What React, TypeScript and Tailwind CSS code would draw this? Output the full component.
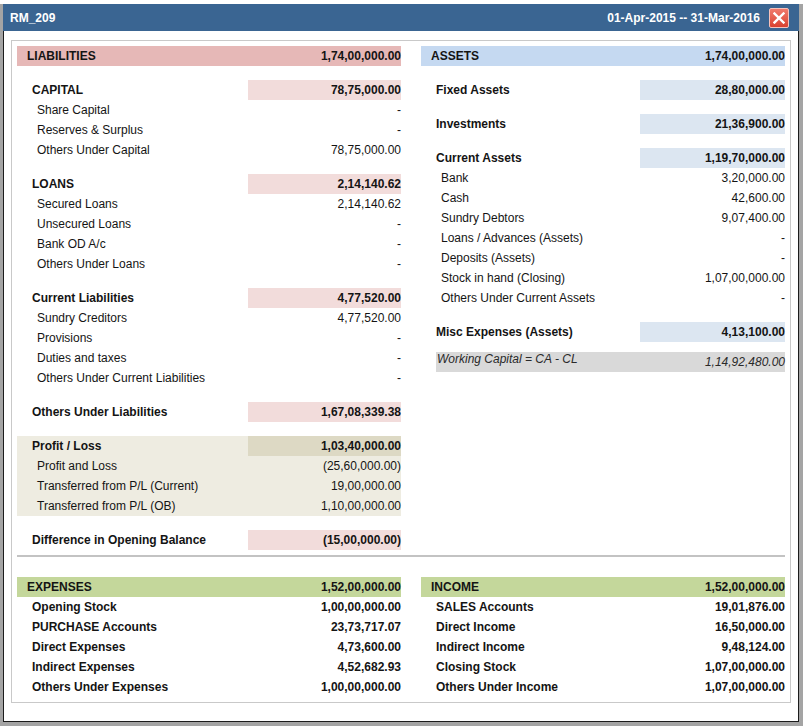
import React from 'react';

type Line = { label: string; value: string };
type Group = { title: string; total: string; items: Line[] };

const liabilities: Group[] = [
  {
    title: 'CAPITAL',
    total: '78,75,000.00',
    items: [
      { label: 'Share Capital', value: '-' },
      { label: 'Reserves & Surplus', value: '-' },
      { label: 'Others Under Capital', value: '78,75,000.00' },
    ],
  },
  {
    title: 'LOANS',
    total: '2,14,140.62',
    items: [
      { label: 'Secured Loans', value: '2,14,140.62' },
      { label: 'Unsecured Loans', value: '-' },
      { label: 'Bank OD A/c', value: '-' },
      { label: 'Others Under Loans', value: '-' },
    ],
  },
  {
    title: 'Current Liabilities',
    total: '4,77,520.00',
    items: [
      { label: 'Sundry Creditors', value: '4,77,520.00' },
      { label: 'Provisions', value: '-' },
      { label: 'Duties and taxes', value: '-' },
      { label: 'Others Under Current Liabilities', value: '-' },
    ],
  },
  { title: 'Others Under Liabilities', total: '1,67,08,339.38', items: [] },
];

const profitLoss: Group = {
  title: 'Profit / Loss',
  total: '1,03,40,000.00',
  items: [
    { label: 'Profit and Loss', value: '(25,60,000.00)' },
    { label: 'Transferred from P/L (Current)', value: '19,00,000.00' },
    { label: 'Transferred from P/L (OB)', value: '1,10,00,000.00' },
  ],
};

const assets: Group[] = [
  { title: 'Fixed Assets', total: '28,80,000.00', items: [] },
  { title: 'Investments', total: '21,36,900.00', items: [] },
  {
    title: 'Current Assets',
    total: '1,19,70,000.00',
    items: [
      { label: 'Bank', value: '3,20,000.00' },
      { label: 'Cash', value: '42,600.00' },
      { label: 'Sundry Debtors', value: '9,07,400.00' },
      { label: 'Loans / Advances (Assets)', value: '-' },
      { label: 'Deposits (Assets)', value: '-' },
      { label: 'Stock in hand (Closing)', value: '1,07,00,000.00' },
      { label: 'Others Under Current Assets', value: '-' },
    ],
  },
  { title: 'Misc Expenses (Assets)', total: '4,13,100.00', items: [] },
];

const expenses: Line[] = [
  { label: 'Opening Stock', value: '1,00,00,000.00' },
  { label: 'PURCHASE Accounts', value: '23,73,717.07' },
  { label: 'Direct Expenses', value: '4,73,600.00' },
  { label: 'Indirect Expenses', value: '4,52,682.93' },
  { label: 'Others Under Expenses', value: '1,00,00,000.00' },
];

const income: Line[] = [
  { label: 'SALES Accounts', value: '19,01,876.00' },
  { label: 'Direct Income', value: '16,50,000.00' },
  { label: 'Indirect Income', value: '9,48,124.00' },
  { label: 'Closing Stock', value: '1,07,00,000.00' },
  { label: 'Others Under Income', value: '1,07,00,000.00' },
];

// one block: bold title row with a shaded amount cell, then plain sub rows
const GroupBlock = ({ group, side, boxBg }: { group: Group; side: 'left' | 'right'; boxBg: string }) => {
  const boxW = side === 'left' ? 'w-[153px]' : 'w-[145px]';
  return (
    <div className="mt-[14px]">
      <div className="flex h-[20px] items-center justify-between">
        <span className="pl-[15px] font-bold">{group.title}</span>
        <span className={`${boxW} ${boxBg} flex h-full items-center justify-end font-bold`}>{group.total}</span>
      </div>
      {group.items.map(item => (
        <div key={item.label} className="flex h-[20px] items-center justify-between">
          <span className="pl-[20px]">{item.label}</span>
          <span>{item.value}</span>
        </div>
      ))}
    </div>
  );
};

const HeadRow = ({ label, value, bg }: { label: string; value: string; bg: string }) => (
  <div className={`flex h-[20px] items-center justify-between font-bold ${bg}`}>
    <span className="pl-[10px]">{label}</span>
    <span>{value}</span>
  </div>
);

const PlainBoldRows = ({ rows }: { rows: Line[] }) => (
  <>
    {rows.map(r => (
      <div key={r.label} className="flex h-[20px] items-center justify-between font-bold">
        <span className="pl-[15px]">{r.label}</span>
        <span>{r.value}</span>
      </div>
    ))}
  </>
);

const App = () => {
  return (
    <div className="flex h-[726px] w-[803px] flex-col overflow-hidden bg-[#a4a4a4] font-['Liberation_Sans',Arial,sans-serif] text-[12px] text-[#141414]">
      <div className="h-[4px] shrink-0 bg-white" />
      <div className="ml-[3px] w-[796px]">
        {/* title bar */}
        <div className="flex h-[27px] items-center bg-[#3a6592] pl-[7px] pr-[10px] font-bold text-white">
          <span>RM_209</span>
          <span className="ml-auto">01-Apr-2015 -- 31-Mar-2016</span>
          <button className="ml-[9px] flex h-[20px] w-[20px] items-center justify-center rounded-[2px] border border-[#f6c2bb] bg-gradient-to-b from-[#f07a6c] to-[#d9402f]">
            <svg width="12" height="12" viewBox="0 0 12 12">
              <path d="M1.5 1.5 L10.5 10.5 M10.5 1.5 L1.5 10.5" stroke="#fff" strokeWidth="2.4" strokeLinecap="square" />
            </svg>
          </button>
        </div>

        <div className="border-x border-b border-[#1c1c1c] bg-white px-[7px] pt-[9px] pb-[18px]">
          <div className="border border-[#c9c9c9] px-[5px] py-[5px]">
            <div className="flex gap-[20px]">
              {/* liabilities */}
              <div className="w-[384px]">
                <HeadRow label="LIABILITIES" value="1,74,00,000.00" bg="bg-[#e6b8b7]" />
                {liabilities.map(g => (
                  <GroupBlock key={g.title} group={g} side="left" boxBg="bg-[#f2dcdb]" />
                ))}
                <div className="mt-[14px] bg-[#eeece1]">
                  <div className="flex h-[20px] items-center justify-between">
                    <span className="pl-[15px] font-bold">{profitLoss.title}</span>
                    <span className="flex h-full w-[153px] items-center justify-end bg-[#ddd9c4] font-bold">{profitLoss.total}</span>
                  </div>
                  {profitLoss.items.map(item => (
                    <div key={item.label} className="flex h-[20px] items-center justify-between">
                      <span className="pl-[20px]">{item.label}</span>
                      <span>{item.value}</span>
                    </div>
                  ))}
                </div>
                <GroupBlock
                  group={{ title: 'Difference in Opening Balance', total: '(15,00,000.00)', items: [] }}
                  side="left"
                  boxBg="bg-[#f2dcdb]"
                />
              </div>

              {/* assets */}
              <div className="w-[364px]">
                <HeadRow label="ASSETS" value="1,74,00,000.00" bg="bg-[#c5d9f1]" />
                {assets.map(g => (
                  <GroupBlock key={g.title} group={g} side="right" boxBg="bg-[#dce6f1]" />
                ))}
                <div className="ml-[15px] mt-[10px] flex h-[20px] justify-between bg-[#d9d9d9] italic text-[#2a2a2a]">
                  <span className="pl-[1px] leading-[14px]">Working Capital = CA - CL</span>
                  <span className="self-center">1,14,92,480.00</span>
                </div>
              </div>
            </div>

            <div className="mt-[5px] h-[2px] bg-[#c3c3c3]" />

            <div className="mt-[20px] flex gap-[20px]">
              <div className="w-[384px]">
                <HeadRow label="EXPENSES" value="1,52,00,000.00" bg="bg-[#c4d79b]" />
                <PlainBoldRows rows={expenses} />
              </div>
              <div className="w-[364px]">
                <HeadRow label="INCOME" value="1,52,00,000.00" bg="bg-[#c4d79b]" />
                <PlainBoldRows rows={income} />
              </div>
            </div>
          </div>
        </div>
      </div>
    </div>
  );
};

export default App;
